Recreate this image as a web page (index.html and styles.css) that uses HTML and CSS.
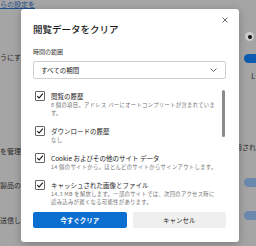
FILE: index.html
```html
<!DOCTYPE html>
<html lang="ja">
<head>
    <meta charset="UTF-8">
    <title>閲覧データをクリア</title>
    <link rel="stylesheet" href="styles.css">
</head>
<body>

<!-- 背景の設定ページ -->
<div class="page">
    <div class="page-left">
        <a class="page-link">らの設定を</a>
        <div class="page-text row-2">うにする</div>
        <div class="page-text row-3">を管理</div>
        <div class="page-text row-4">製品の</div>
        <div class="page-text row-5">送信し</div>
    </div>
    <div class="page-right">
        <span class="radio"></span>
        <span class="toggle on"></span>
        <span class="page-text small">L</span>
        <span class="page-text used">使用され</span>
        <span class="toggle dim"></span>
        <span class="toggle dim"></span>
    </div>
</div>

<!-- ダイアログ -->
<div class="dialog">
    <div class="dialog-header">
        <h1>閲覧データをクリア</h1>
        <svg class="close" width="6" height="6" viewBox="0 0 6 6">
            <path d="M0.5 0.5 L5.5 5.5 M5.5 0.5 L0.5 5.5" stroke="#444" stroke-width="0.8"/>
        </svg>
    </div>

    <div class="range-label">時間の範囲</div>
    <div class="select">
        <span>すべての期間</span>
        <svg width="7" height="4" viewBox="0 0 7 4">
            <path d="M0.5 0.5 L3.5 3.5 L6.5 0.5" fill="none" stroke="#444" stroke-width="0.8"/>
        </svg>
    </div>

    <div class="list-wrap">
        <div class="list">
            <div class="item">
                <span class="check"><svg width="8" height="8" viewBox="0 0 8 8"><path d="M1.3 4.2 L3.1 6 L6.8 1.6" fill="none" stroke="#111" stroke-width="1.1"/></svg></span>
                <div class="item-text">
                    <div class="item-title">閲覧の履歴</div>
                    <div class="item-sub">8 個の項目。アドレス バーにオートコンプリートが含まれています。</div>
                </div>
            </div>
            <div class="item">
                <span class="check"><svg width="8" height="8" viewBox="0 0 8 8"><path d="M1.3 4.2 L3.1 6 L6.8 1.6" fill="none" stroke="#111" stroke-width="1.1"/></svg></span>
                <div class="item-text">
                    <div class="item-title">ダウンロードの履歴</div>
                    <div class="item-sub">なし</div>
                </div>
            </div>
            <div class="item">
                <span class="check"><svg width="8" height="8" viewBox="0 0 8 8"><path d="M1.3 4.2 L3.1 6 L6.8 1.6" fill="none" stroke="#111" stroke-width="1.1"/></svg></span>
                <div class="item-text">
                    <div class="item-title">Cookie およびその他のサイト データ</div>
                    <div class="item-sub">14 個のサイトから。ほとんどのサイトからサインアウトします。</div>
                </div>
            </div>
            <div class="item">
                <span class="check"><svg width="8" height="8" viewBox="0 0 8 8"><path d="M1.3 4.2 L3.1 6 L6.8 1.6" fill="none" stroke="#111" stroke-width="1.1"/></svg></span>
                <div class="item-text">
                    <div class="item-title">キャッシュされた画像とファイル</div>
                    <div class="item-sub">14.3 MB を解放します。一部のサイトでは、次回のアクセス時に読み込みが遅くなる可能性があります。</div>
                </div>
            </div>
        </div>
        <div class="scroll-thumb"></div>
    </div>

    <div class="buttons">
        <button class="btn primary">今すぐクリア</button>
        <button class="btn">キャンセル</button>
    </div>
</div>

</body>
</html>
```

FILE: styles.css
```css
body {
    margin: 0;
    width: 256px;
    height: 246px;
    overflow: hidden;
    font-family: "Noto Sans CJK JP", "Noto Sans", sans-serif;
    background: #a5a5a5;
    color: #1a1a1a;
}

/* background page */
.page {
    display: flex;
    justify-content: space-between;
    height: 246px;
}

.page-left {
    display: flex;
    flex-direction: column;
    width: 40px;
    font-size: 7px;
    line-height: 9px;
}

.page-link {
    color: #1d4f8a;
    text-decoration: underline;
    margin-top: 0;
    white-space: nowrap;
}

.page-text {
    color: #2a2a2a;
    white-space: nowrap;
}

.row-2 { margin-top: 44px; }
.row-3 { margin-top: 85px; }
.row-4 { margin-top: 25px; }
.row-5 { margin-top: 26px; }

.page-right {
    width: 20px;
    display: flex;
    flex-direction: column;
    align-items: flex-end;
    font-size: 7px;
    line-height: 9px;
}

.radio {
    width: 9px;
    height: 9px;
    border-radius: 50%;
    background: #ccc;
    margin-top: 32px;
    margin-right: 2px;
    position: relative;
}

.radio::after {
    content: "";
    position: absolute;
    left: 2.5px;
    top: 2.5px;
    width: 4px;
    height: 4px;
    border-radius: 50%;
    background: #111;
}

.toggle {
    width: 12px;
    height: 9px;
    border-radius: 5px 0 0 5px;
}

.toggle.on {
    background: #0b5cb0;
    margin-top: 13px;
}

.toggle.dim {
    background: #6b88ad;
}

.small {
    margin-top: 9px;
    margin-right: 1px;
}

.used {
    margin-top: 62px;
}

.toggle.dim:nth-of-type(5) { margin-top: 26px; }
.toggle.dim:nth-of-type(6) { margin-top: 24px; }

/* dialog */
.dialog {
    position: absolute;
    left: 21px;
    top: 9px;
    width: 218px;
    height: 233px;
    box-sizing: border-box;
    padding: 8px 13px 14px 12px;
    background: #fff;
    border-radius: 3px;
    box-shadow: 0 2px 8px rgba(0, 0, 0, 0.25);
    display: flex;
    flex-direction: column;
}

.dialog-header {
    display: flex;
    justify-content: space-between;
    align-items: flex-start;
}

.dialog-header h1 {
    margin: 6px 0 0;
    font-size: 9.5px;
    line-height: 12px;
    font-weight: 500;
    color: #1a1a1a;
}

.close {
    margin-right: -2px;
}

.range-label {
    margin-top: 13px;
    font-size: 6px;
    line-height: 8px;
    color: #333;
}

.select {
    margin-top: 5px;
    height: 18px;
    box-sizing: border-box;
    border: 1px solid #d0d0d0;
    border-radius: 2px;
    display: flex;
    align-items: center;
    justify-content: space-between;
    padding: 0 8px 0 7px;
    font-size: 6.5px;
}

.list-wrap {
    position: relative;
    flex: 1;
    margin-top: 9px;
    overflow: hidden;
}

.list {
    display: flex;
    flex-direction: column;
    gap: 9px;
    padding-top: 3px;
}

.item {
    display: flex;
    align-items: flex-start;
}

.check {
    width: 10px;
    height: 10px;
    box-sizing: border-box;
    border: 1px solid #666;
    border-radius: 1px;
    display: flex;
    align-items: center;
    justify-content: center;
    margin: 0 6px 0 2px;
    flex-shrink: 0;
}

.item-text {
    width: 168px;
}

.item-title {
    font-size: 6.5px;
    line-height: 10px;
    color: #1a1a1a;
}

.item-sub {
    font-size: 5.3px;
    line-height: 8px;
    letter-spacing: 0.35px;
    color: #707070;
}

.scroll-thumb {
    position: absolute;
    right: 1px;
    top: 2px;
    width: 3px;
    height: 47px;
    border-radius: 2px;
    background: #8a8a8a;
}

.buttons {
    display: flex;
    gap: 6px;
}

.btn {
    flex: 1;
    height: 16px;
    border: none;
    border-radius: 2px;
    font-family: inherit;
    font-size: 6.5px;
    background: #efefef;
    color: #1a1a1a;
    padding: 0;
}

.btn.primary {
    background: #0a6fd1;
    color: #fff;
    font-weight: 700;
}
```
